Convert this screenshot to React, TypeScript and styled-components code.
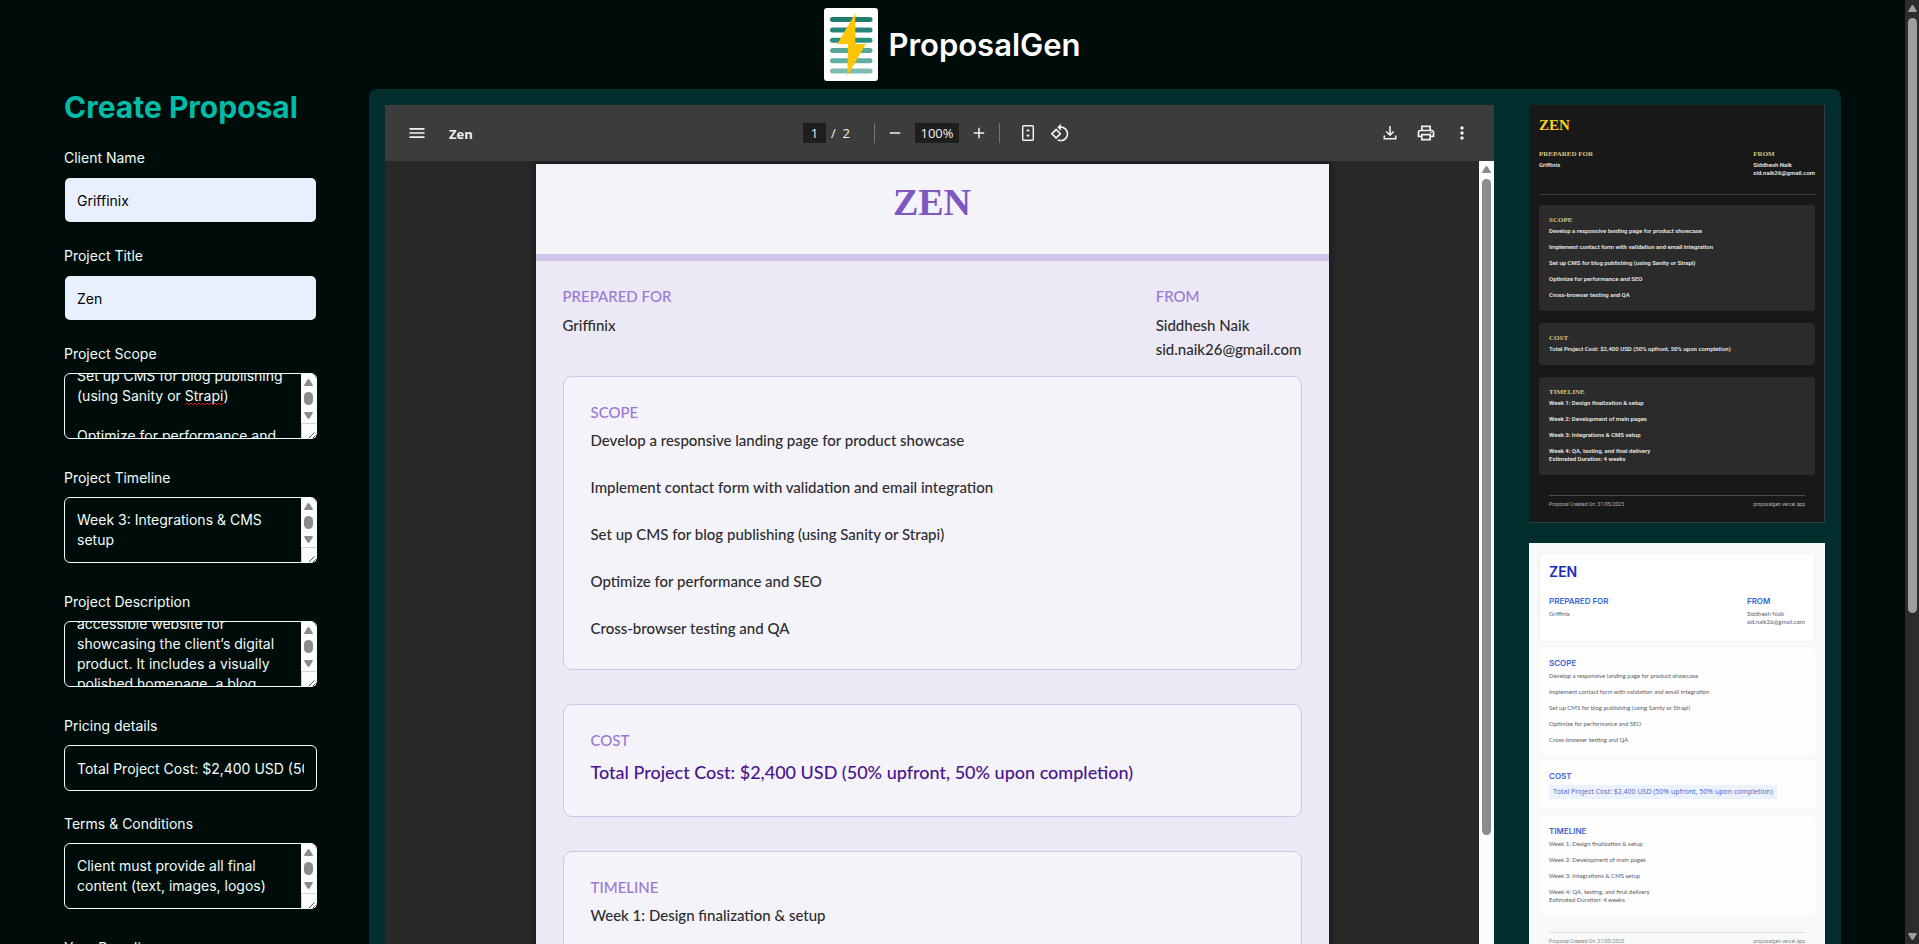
import React, { useLayoutEffect, useRef, useState } from "react";
import styled, { createGlobalStyle } from "styled-components";
import { MdAdd, MdMenu, MdMoreVert, MdOutlinePrint, MdRemove, MdRotate90DegreesCcw } from "react-icons/md";

const GlobalStyle = createGlobalStyle`
  *, *::before, *::after { box-sizing: border-box; }
  body {
    margin: 0;
    background: #000c09;
    color: #f0fdfa;
    font-family: Inter, "Liberation Sans", sans-serif;
  }
  h1, h2, h3, p, ul { margin: 0; padding: 0; }
  ul { list-style: none; }
`;

/* ---------- page frame ---------- */

const Shell = styled.div`
  display: flex;
  height: 100vh;
  overflow: hidden;
`;

const Page = styled.div`
  flex: 1;
  min-width: 0;
  padding: 0 64px;
`;

const Header = styled.header`
  display: flex;
  align-items: center;
  justify-content: center;
  gap: 10px;
  height: 89px;
`;

const Brand = styled.span`
  font-size: 31px;
  line-height: 36px;
  font-weight: 600;
  color: #fff;
`;

const Main = styled.main`
  display: flex;
  align-items: flex-start;
  gap: 52px;
`;

/* ---------- scroll bars ---------- */

const Track = styled.div<{ $dark?: boolean }>`
  flex: none;
  display: flex;
  flex-direction: column;
  align-items: center;
  width: ${(p) => (p.$dark ? 14 : 15)}px;
  padding: 5px 0 4px;
  background: ${(p) => (p.$dark ? "#2c2c2c" : "#fcfcfc")};
  color: ${(p) => (p.$dark ? "#9f9f9f" : "#8b8b8b")};
`;

const Thumb = styled.div<{ $size: number }>`
  flex: none;
  width: 9px;
  height: ${(p) => p.$size}px;
  margin-top: 6px;
  border-radius: 5px;
  background: currentColor;
`;

const Spacer = styled.div`
  flex: 1;
`;

const ArrowSvg = styled.svg`
  flex: none;
`;

const Arrow = ({ down }: { down?: boolean }) => (
  <ArrowSvg width="9" height="7" viewBox="0 0 9 7" fill="currentColor">
    <path d={down ? "M1 0h7q1 0 .8.9L5.6 6.3q-1.1 1.2-2.2 0L.2.9Q0 0 1 0z" : "M1 7h7q1 0 .8-.9L5.6.7q-1.1-1.2-2.2 0L.2 6.1Q0 7 1 7z"} />
  </ArrowSvg>
);

/* ---------- form ---------- */

const Form = styled.form`
  flex: 0 0 253px;
`;

const FormTitle = styled.h1`
  margin-bottom: 23px;
  font-size: 30px;
  line-height: 36px;
  font-weight: 700;
  color: #00bba7;
`;

const Field = styled.div`
  display: flex;
  flex-direction: column;
  gap: 9px;
  margin-bottom: 23px;
`;

const Label = styled.label`
  font-size: 14px;
  line-height: 20px;
  font-weight: 400;
`;

const TextInput = styled.input<{ $filled?: boolean }>`
  width: 100%;
  height: 46px;
  padding: 0 12px;
  border: 1px solid ${(p) => (p.$filled ? "transparent" : "#f0fdfa")};
  border-radius: 6px;
  background: ${(p) => (p.$filled ? "#e8f0fe" : "transparent")};
  background-clip: padding-box;
  color: ${(p) => (p.$filled ? "#000" : "#f0fdfa")};
  font: 400 14px/20px Inter, "Liberation Sans", sans-serif;
  outline: none;
`;

const AreaWrap = styled.div`
  position: relative;
  padding-bottom: 6px;
`;

const Area = styled.textarea`
  display: block;
  width: 100%;
  height: 66px;
  padding: 12px 27px 12px 12px;
  border: 1px solid #f0fdfa;
  border-radius: 6px;
  background: transparent;
  color: #f0fdfa;
  font: 400 14px/20px Inter, "Liberation Sans", sans-serif;
  outline: none;
  resize: none;
  scrollbar-width: none;
`;

const AreaBar = styled.div`
  position: absolute;
  top: 1px;
  right: 1px;
  display: flex;
  flex-direction: column;
  width: 15px;
  height: 64px;
  border-radius: 0 5px 2px 0;
  overflow: hidden;

  ${Track} {
    height: 49px;
  }
`;

const Grip = styled.div`
  height: 15px;
  border-top: 1px solid #d6d6d6;
  border-left: 1px solid #d6d6d6;
  background: #fcfcfc;
`;

const Squiggle = styled.svg`
  position: absolute;
  left: 121px;
  top: 29px;
`;

function TextArea({ id, text, scroll = 0, squiggle }: { id: string; text: string; scroll?: number; squiggle?: boolean }) {
  const ref = useRef<HTMLTextAreaElement>(null);
  useLayoutEffect(() => {
    if (ref.current) ref.current.scrollTop = scroll;
  }, [scroll]);
  return (
    <AreaWrap>
      <Area id={id} ref={ref} defaultValue={text} />
      {squiggle && (
        <Squiggle width="38" height="4" viewBox="0 0 38 4" fill="none" stroke="#d01818">
          <path d="M0 3l2-2 2 2 2-2 2 2 2-2 2 2 2-2 2 2 2-2 2 2 2-2 2 2 2-2 2 2 2-2 2 2 2-2 2 2 2-2" />
        </Squiggle>
      )}
      <AreaBar aria-hidden>
        <Track>
          <Arrow />
          <Thumb $size={13} />
          <Spacer />
          <Arrow down />
        </Track>
        <Grip>
          <svg width="14" height="14" viewBox="0 0 14 14" stroke="#555" fill="none">
            <path d="M6.500 12.500l6-6M10.500 12.500l3-3" />
          </svg>
        </Grip>
      </AreaBar>
    </AreaWrap>
  );
}

/* ---------- preview panel ---------- */

const Panel = styled.section`
  flex: 1;
  min-width: 0;
  display: flex;
  gap: 35px;
  padding: 16px;
  border-radius: 8px;
  background: #022f2e;
`;

const Viewer = styled.div`
  flex: 1;
  min-width: 0;
  display: flex;
  flex-direction: column;
  background: #282828;
`;

const Toolbar = styled.div`
  display: grid;
  grid-template-columns: 1fr auto 1fr;
  align-items: center;
  height: 56px;
  padding: 0 16px;
  background: #3c3c3c;
  color: #f1f1f1;
  font: 400 13px/20px "Open Sans", "Noto Sans", sans-serif;
  position: relative;
  z-index: 1;
`;

const ToolGroup = styled.div<{ $gap?: number; $end?: boolean }>`
  display: flex;
  align-items: center;
  justify-content: ${(p) => (p.$end ? "flex-end" : "flex-start")};
  gap: ${(p) => p.$gap ?? 0}px;
`;

const IconButton = styled.button`
  display: grid;
  place-items: center;
  width: 32px;
  height: 32px;
  padding: 0;
  border: 0;
  background: none;
  color: inherit;
`;

const FileName = styled.span`
  padding-top: 2px;
  font-weight: 700;
`;

const ToolInput = styled.input<{ $wide?: boolean }>`
  width: ${(p) => (p.$wide ? 44 : 23)}px;
  height: 20px;
  padding: 0;
  border: 0;
  background: #1e1e1e;
  color: inherit;
  font: inherit;
  text-align: center;
`;

const PageCount = styled.span`
  padding: 0 20px 0 1px;
  white-space: pre;
`;

const Divider = styled.span<{ $after?: boolean }>`
  width: 1px;
  height: 20px;
  margin-right: ${(p) => (p.$after ? 8 : 0)}px;
  background: #767676;
`;

const ViewerBody = styled.div`
  display: flex;
  flex: 1;
`;

const Canvas = styled.div`
  flex: 1;
  display: flex;
  justify-content: center;
  align-items: flex-start;
  padding: 3px 0;
  overflow: hidden;
`;

/* ---------- document page ---------- */

const Sheet = styled.article`
  width: 793px;
  min-height: 1123px;
  background: #ece9f6;
  box-shadow: 0 0 6px 3px rgba(0, 0, 0, 0.3);
  color: #2c2c2c;
  font: 500 15px/24px Lato, "Open Sans", sans-serif;
`;

const SheetHead = styled.header`
  height: 97px;
  padding-top: 14px;
  border-bottom: 7px solid #d1c4e9;
  background: #f4f3fa;
  text-align: center;
`;

const SheetTitle = styled.h2`
  font: 700 38px/48px "Liberation Serif", serif;
  color: #7e57c2;
`;

const SheetBody = styled.div`
  padding: 26px 27px 34px;
`;

const Caption = styled.h3`
  margin-bottom: 8px;
  font-size: 15px;
  line-height: 18px;
  font-weight: 500;
  color: #9b78d3;
`;

const Parties = styled.div`
  display: flex;
  justify-content: space-between;
`;

const SheetParties = styled(Parties)`
  margin-bottom: 15px;
`;

const Card = styled.section`
  margin-bottom: 34px;
  padding: 26px 27px 29px;
  border: 1px solid #d1c4e9;
  border-radius: 9px;
  background: #f4f3fa;
`;

const Items = styled.ul`
  display: flex;
  flex-direction: column;
  gap: 24px;
  line-height: 23px;
`;

const Total = styled.p`
  font-size: 18px;
  line-height: 30px;
  color: #4a148c;
`;

/* ---------- template thumbnails ---------- */

const Templates = styled.aside`
  flex: 0 0 296px;
  display: flex;
  flex-direction: column;
  gap: 20px;
`;

const Dark = styled.article`
  height: 418px;
  padding: 10px 9px 10px 10px;
  border-right: 1px solid #3a3a3a;
  border-bottom: 1px solid #3a3a3a;
  background: #181818;
  color: #e6e6e6;
  font: 600 6px/8px Roboto, sans-serif;
`;

const DarkTitle = styled.h2`
  margin-bottom: 14px;
  font: 700 15px/20px "Liberation Serif", serif;
  color: #f8d61c;
`;

const DarkCaption = styled.h3`
  margin-bottom: 2px;
  font: 700 7px/10px "Liberation Serif", serif;
  color: #d8c47c;
`;

const DarkParties = styled(Parties)`
  margin-bottom: 10px;
  padding-bottom: 17px;
  border-bottom: 1px solid #404040;
`;

const DarkCard = styled.section`
  margin-bottom: 12px;
  padding: 10px 10px 12px;
  border-radius: 3px;
  background: #2b2b2b;
`;

const MiniItems = styled.ul`
  display: flex;
  flex-direction: column;
  gap: 8px;
`;

const MiniFooter = styled.footer`
  display: flex;
  justify-content: space-between;
  margin: 20px 10px 0;
  padding-top: 4px;
  border-top: 1px solid #4c4c4c;
  color: #b4b4b4;
  font: 400 5px/8px Roboto, sans-serif;
`;

const LightFooter = styled(MiniFooter)`
  margin-top: 18px;
  border-color: #d9dde0;
  color: #808488;
`;

const Light = styled.article`
  height: 418px;
  padding: 10px;
  background: #f8fafa;
  color: #5c5c5c;
  font: 400 6px/8px Lato, "Open Sans", sans-serif;
`;

const LightTop = styled.header`
  height: 89px;
  margin: 0 0 6px;
  padding: 8px 9px 0;
  border: 1px solid #eef1f5;
  background: #fff;
`;

const LightTitle = styled.h2`
  margin-bottom: 14px;
  font: 600 14px/20px Inter, sans-serif;
  color: #1c2bbd;
`;

const LightCaption = styled.h3`
  margin-bottom: 4px;
  font: 600 8px/10px Inter, sans-serif;
  color: #3a66d4;
`;

const LightCard = styled.section`
  margin-bottom: 7px;
  padding: 10px;
  border-radius: 3px;
  background: #fefefe;
`;

const LightTotal = styled.p`
  width: fit-content;
  padding: 0 4px;
  background: #eaf2fe;
  font: 400 7px/14px "Open Sans", sans-serif;
  color: #5560c8;
`;

const SCOPE = [
  "Develop a responsive landing page for product showcase",
  "Implement contact form with validation and email integration",
  "Set up CMS for blog publishing (using Sanity or Strapi)",
  "Optimize for performance and SEO",
  "Cross-browser testing and QA",
];
const WEEKS = [
  "Week 1: Design finalization & setup",
  "Week 2: Development of main pages",
  "Week 3: Integrations & CMS setup",
  "Week 4: QA, testing, and final delivery",
];
const DURATION = "Estimated Duration: 4 weeks";
const COST = "Total Project Cost: $2,400 USD (50% upfront, 50% upon completion)";
const DESCRIPTION =
  "Design and build a modern, fast and\naccessible website for showcasing the client’s digital product. It includes a visually polished homepage, a blog section, and a contact form.";

const lines = (rows: string[]) => rows.map((row) => <li key={row}>{row}</li>);

function PartyBlocks({ title: Title, client }: { title: React.ElementType; client: string }) {
  return (
    <>
      <div>
        <Title>PREPARED FOR</Title>
        <p>{client}</p>
      </div>
      <div>
        <Title>FROM</Title>
        <p>Siddhesh Naik</p>
        <p>sid.naik26@gmail.com</p>
      </div>
    </>
  );
}

const Logo = () => (
  <svg width="54" height="73" viewBox="0 0 54 73" aria-hidden>
    <rect width="54" height="73" rx="3" fill="#fff" />
    <g strokeWidth="5" strokeLinecap="round">
      <path d="M8.500 11.500h37.500" stroke="#1f7d70" />
      <path d="M8.500 22h37.500" stroke="#258678" />
      <path d="M8.500 32.200h37.500" stroke="#2b8f80" />
      <path d="M8.500 42.500h37.500" stroke="#56a79a" />
      <path d="M8.500 52.800h37.500" stroke="#60ada1" />
      <path d="M8.500 63h37.500" stroke="#7dbcb2" />
    </g>
    <path d="M31.300 5.300L13.300 36h10.700L23.300 68 41.800 36H31.300z" fill="#ffc506" />
  </svg>
);

const FitIcon = () => (
  <svg width="20" height="20" viewBox="0 0 20 20" fill="none" stroke="currentColor" strokeWidth="1.500">
    <rect x="4.700" y="2.700" width="10.600" height="14.600" rx="1" />
    <path d="M10 5.800l2 2.400H8zM10 14.200l2-2.400H8z" fill="currentColor" stroke="none" />
  </svg>
);

const DownloadIcon = () => (
  <svg width="20" height="20" viewBox="0 0 20 20" fill="none" stroke="currentColor" strokeWidth="1.600">
    <path d="M10 3v9M6.300 8.500L10 12.200l3.700-3.700M4.300 12.500v3.200h11.400v-3.200" />
  </svg>
);

export default function App() {
  const [client, setClient] = useState("Griffinix");
  const [title, setTitle] = useState("Zen");
  const heading = title.toUpperCase();

  return (
    <>
      <GlobalStyle />
      <Shell>
        <Page>
          <Header>
            <Logo />
            <Brand>ProposalGen</Brand>
          </Header>
          <Main>
            <Form>
              <FormTitle>Create Proposal</FormTitle>
              <Field>
                <Label htmlFor="client">Client Name</Label>
                <TextInput id="client" $filled value={client} onChange={(e) => setClient(e.target.value)} />
              </Field>
              <Field>
                <Label htmlFor="title">Project Title</Label>
                <TextInput id="title" $filled value={title} onChange={(e) => setTitle(e.target.value)} />
              </Field>
              <Field>
                <Label htmlFor="scope">Project Scope</Label>
                <TextArea id="scope" text={SCOPE.join("\n\n")} scroll={140} squiggle />
              </Field>
              <Field>
                <Label htmlFor="timeline">Project Timeline</Label>
                <TextArea id="timeline" text={WEEKS.slice(2).join("\n\n")} />
              </Field>
              <Field>
                <Label htmlFor="description">Project Description</Label>
                <TextArea id="description" text={DESCRIPTION} scroll={60} />
              </Field>
              <Field>
                <Label htmlFor="pricing">Pricing details</Label>
                <TextInput id="pricing" defaultValue={COST} />
              </Field>
              <Field>
                <Label htmlFor="terms">Terms &amp; Conditions</Label>
                <TextArea id="terms" text={"Client must provide all final content (text, images, logos)\n\nbefore development begins."} />
              </Field>
              <Field>
                <Label htmlFor="branding">Your Branding</Label>
                <TextInput id="branding" />
              </Field>
            </Form>

            <Panel>
              <Viewer>
                <Toolbar>
                  <ToolGroup $gap={16}>
                    <IconButton aria-label="Menu"><MdMenu size={20} /></IconButton>
                    <FileName>{title}</FileName>
                  </ToolGroup>
                  <ToolGroup $gap={4}>
                    <ToolInput aria-label="Page" defaultValue="1" />
                    <PageCount>{"/  2"}</PageCount>
                    <Divider />
                    <IconButton aria-label="Zoom out"><MdRemove size={18} /></IconButton>
                    <ToolInput aria-label="Zoom" $wide defaultValue="100%" />
                    <IconButton aria-label="Zoom in"><MdAdd size={18} /></IconButton>
                    <Divider $after />
                    <ToolGroup>
                      <IconButton aria-label="Fit to page"><FitIcon /></IconButton>
                      <IconButton aria-label="Rotate"><MdRotate90DegreesCcw size={20} /></IconButton>
                    </ToolGroup>
                  </ToolGroup>
                  <ToolGroup $gap={4} $end>
                    <IconButton aria-label="Download"><DownloadIcon /></IconButton>
                    <IconButton aria-label="Print"><MdOutlinePrint size={20} /></IconButton>
                    <IconButton aria-label="More"><MdMoreVert size={20} /></IconButton>
                  </ToolGroup>
                </Toolbar>
                <ViewerBody>
                  <Canvas>
                    <Sheet>
                      <SheetHead>
                        <SheetTitle>{heading}</SheetTitle>
                      </SheetHead>
                      <SheetBody>
                        <SheetParties>
                          <PartyBlocks title={Caption} client={client} />
                        </SheetParties>
                        <Card>
                          <Caption>SCOPE</Caption>
                          <Items>{lines(SCOPE)}</Items>
                        </Card>
                        <Card>
                          <Caption>COST</Caption>
                          <Total>{COST}</Total>
                        </Card>
                        <Card>
                          <Caption>TIMELINE</Caption>
                          <Items>{lines(WEEKS)}</Items>
                        </Card>
                      </SheetBody>
                    </Sheet>
                  </Canvas>
                  <Track aria-hidden>
                    <Arrow />
                    <Thumb $size={656} />
                  </Track>
                </ViewerBody>
              </Viewer>

              <Templates>
                <Dark>
                  <DarkTitle>{heading}</DarkTitle>
                  <DarkParties>
                    <PartyBlocks title={DarkCaption} client={client} />
                  </DarkParties>
                  <DarkCard>
                    <DarkCaption>SCOPE</DarkCaption>
                    <MiniItems>{lines(SCOPE)}</MiniItems>
                  </DarkCard>
                  <DarkCard>
                    <DarkCaption>COST</DarkCaption>
                    <p>{COST}</p>
                  </DarkCard>
                  <DarkCard>
                    <DarkCaption>TIMELINE</DarkCaption>
                    <MiniItems>{lines(WEEKS)}</MiniItems>
                    <p>{DURATION}</p>
                  </DarkCard>
                  <MiniFooter>
                    <span>Proposal Created On: 31/05/2025</span>
                    <span>proposalgen.vercel.app</span>
                  </MiniFooter>
                </Dark>
                <Light>
                  <LightTop>
                    <LightTitle>{heading}</LightTitle>
                    <Parties>
                      <PartyBlocks title={LightCaption} client={client} />
                    </Parties>
                  </LightTop>
                  <LightCard>
                    <LightCaption>SCOPE</LightCaption>
                    <MiniItems>{lines(SCOPE)}</MiniItems>
                  </LightCard>
                  <LightCard>
                    <LightCaption>COST</LightCaption>
                    <LightTotal>{COST}</LightTotal>
                  </LightCard>
                  <LightCard>
                    <LightCaption>TIMELINE</LightCaption>
                    <MiniItems>{lines(WEEKS)}</MiniItems>
                    <p>{DURATION}</p>
                  </LightCard>
                  <LightFooter>
                    <span>Proposal Created On: 31/05/2025</span>
                    <span>proposalgen.vercel.app</span>
                  </LightFooter>
                </Light>
              </Templates>
            </Panel>
          </Main>
        </Page>
        <Track $dark aria-hidden>
          <Arrow />
          <Thumb $size={595} />
          <Spacer />
          <Arrow down />
        </Track>
      </Shell>
    </>
  );
}
